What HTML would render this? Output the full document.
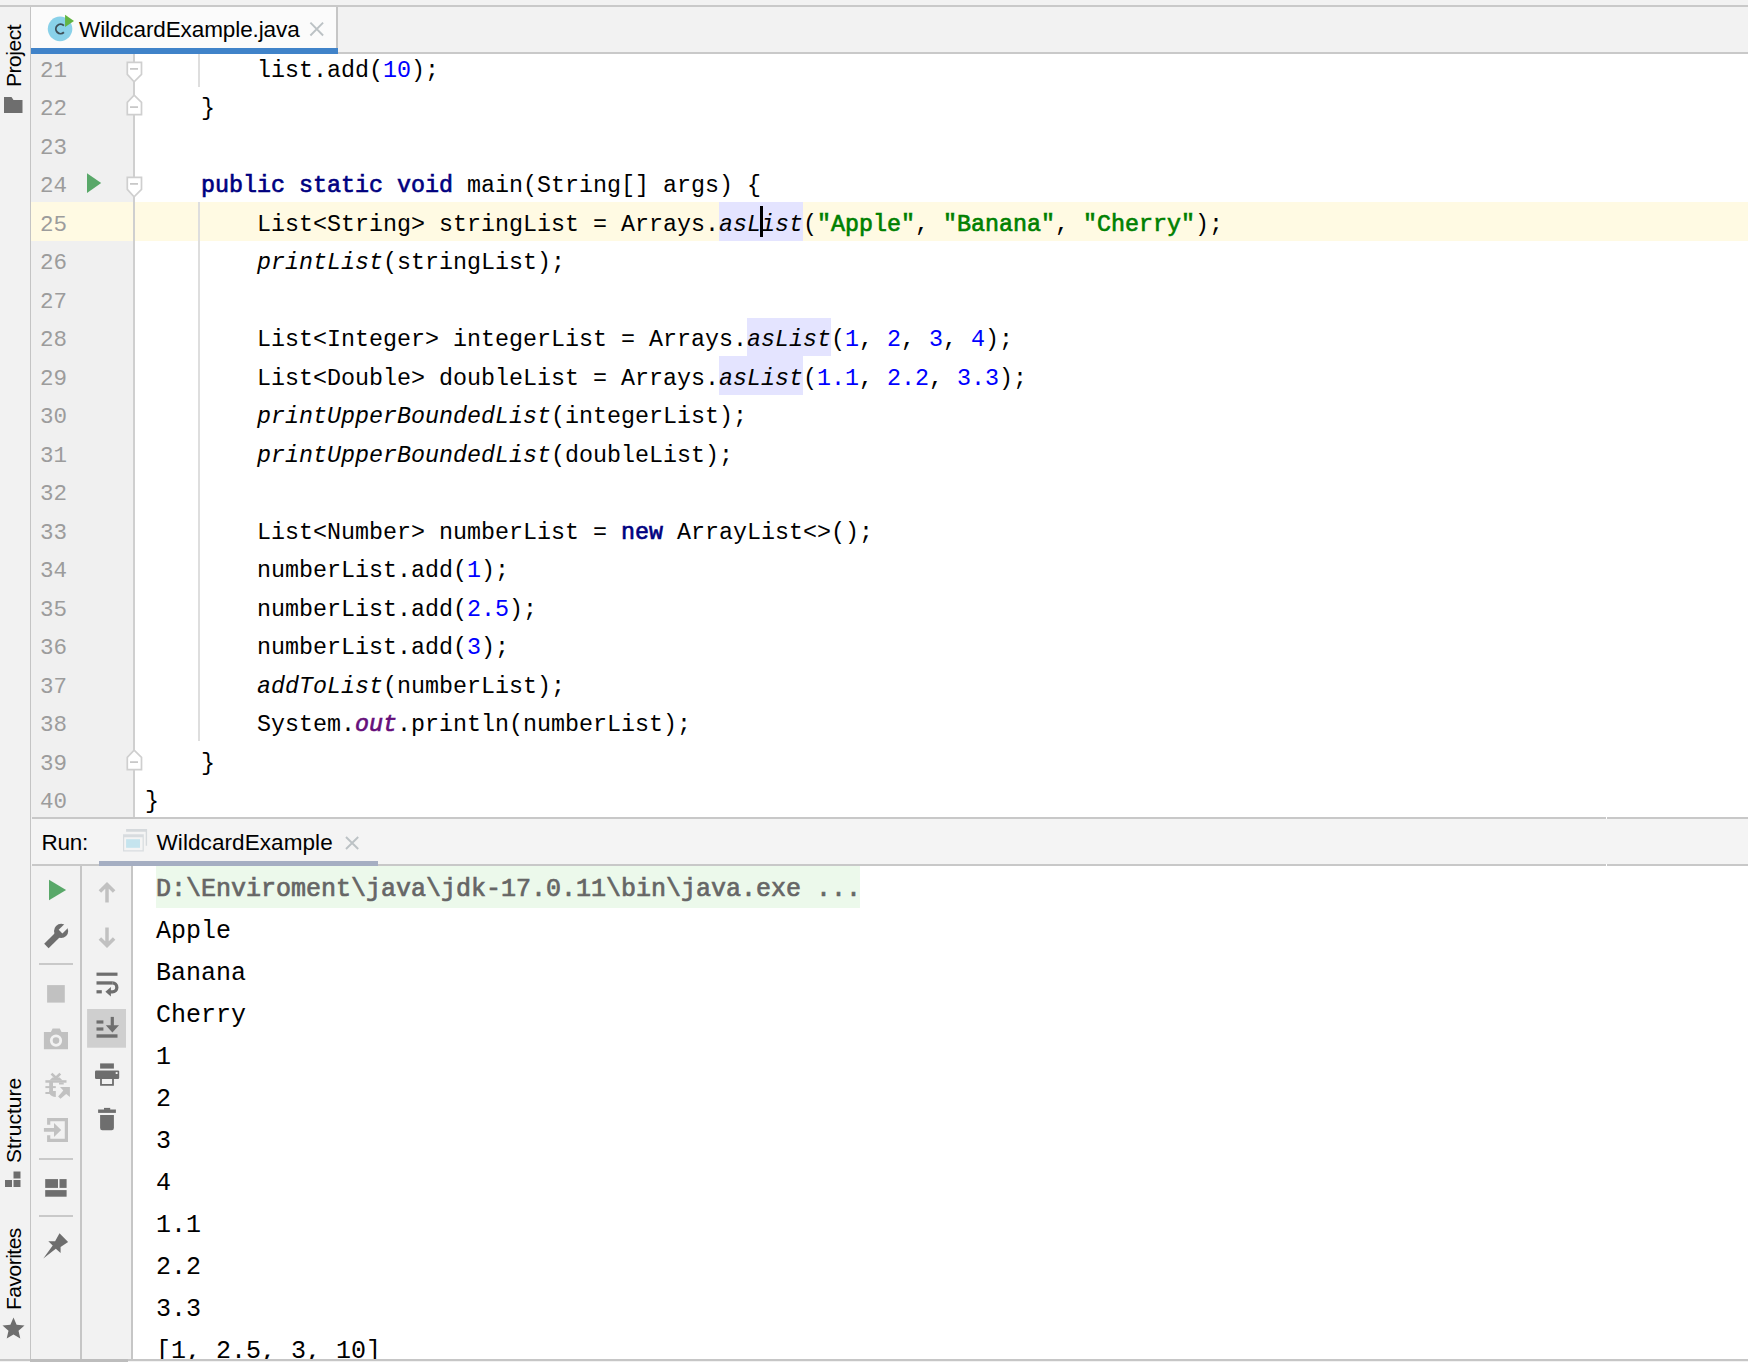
<!DOCTYPE html>
<html><head><meta charset="utf-8"><title>WildcardExample</title>
<style>
*{box-sizing:border-box;margin:0;padding:0}
html,body{width:1748px;height:1362px;overflow:hidden;background:#f2f2f2;font-family:"Liberation Sans",sans-serif;color:#000}
.abs{position:absolute}
#root{position:relative;width:1748px;height:1362px;overflow:hidden;background:#f2f2f2}
/* editor */
#editor{position:absolute;left:31px;top:54px;width:1717px;height:763.5px;background:#fff;overflow:hidden}
#gutter{position:absolute;left:0;top:0;width:102.2px;height:100%;background:#f0f0f0}
#foldline{position:absolute;left:102.1px;top:0;width:1.9px;height:100%;background:#cfcfcf}
.cl,.ln{position:absolute;height:38px;line-height:38px;white-space:pre;font-family:"Liberation Mono",monospace}
.cl{left:114px;font-size:23.33px;color:#000;padding-top:4px}
.ln{left:9px;font-size:22.5px;color:#9c9c9c;padding-top:4px}
.k{color:#000080;-webkit-text-stroke:0.65px #000080}
.s{color:#008000;-webkit-text-stroke:0.65px #008000}
.n{color:#0000ff}
.i{font-style:italic}
.f{color:#660e7a;-webkit-text-stroke:0.65px #660e7a;font-style:italic}
.hl{position:absolute;background:#e4e4ff}
/* console */
#console{position:absolute;left:133px;top:866px;width:1615px;height:493.5px;background:#fff;overflow:hidden}
.co{position:absolute;left:23px;height:42px;line-height:42px;white-space:pre;font-family:"Liberation Mono",monospace;font-size:25px;color:#000;padding-top:3px}
.co.sys{color:#666;-webkit-text-stroke:0.7px #666}
.vt{position:absolute;font-size:21px;white-space:nowrap;transform-origin:0 0;transform:rotate(-90deg);line-height:24px;height:24px}
</style></head><body><div id="root">

<!-- top strip line -->
<div class="abs" style="left:0;top:5px;width:1748px;height:1.6px;background:#c9c9c9"></div>

<!-- left sidebar -->
<div class="abs" style="left:29.8px;top:7px;width:1.3px;height:1353px;background:#c4c4c4"></div>
<div class="vt" style="left:2px;top:86.5px;letter-spacing:-0.45px">Project</div>
<svg class="abs" style="left:3px;top:96px" width="20" height="18" viewBox="0 0 20 18"><path d="M1 1h7.5l2 3H19.5v13H1z" fill="#6e6e6e"/></svg>
<div class="vt" style="left:2px;top:1163px">Structure</div>
<svg class="abs" style="left:4px;top:1171px" width="18" height="17" viewBox="0 0 18 17"><rect x="9.5" y="0.5" width="7" height="7" fill="#6e6e6e"/><rect x="1" y="9" width="7" height="7" fill="#6e6e6e"/><rect x="9.5" y="9" width="7" height="7" fill="#6e6e6e"/></svg>
<div class="vt" style="left:2px;top:1310px;letter-spacing:-0.5px">Favorites</div>
<svg class="abs" style="left:2px;top:1317px" width="23" height="22" viewBox="0 0 23 22"><path d="M11.5 0.5l3.1 7.3 7.9.7-6 5.2 1.8 7.8-6.8-4.1-6.8 4.1 1.8-7.8-6-5.2 7.9-.7z" fill="#6e6e6e"/></svg>

<!-- tab bar -->
<div class="abs" style="left:31px;top:52.3px;width:1717px;height:1.7px;background:#c9c9c9"></div>
<div class="abs" style="left:31px;top:6.6px;width:305.5px;height:47.4px;background:#fbfbfb"></div>
<div class="abs" style="left:336.1px;top:6.6px;width:1.9px;height:42px;background:#c6c6c6"></div>
<div class="abs" style="left:31px;top:48px;width:307px;height:5.7px;background:#4083c9"></div>
<svg class="abs" style="left:46px;top:14px" width="30" height="28" viewBox="0 0 30 28"><circle cx="14.05" cy="14.85" r="12.3" fill="#89d1e9"/><path d="M17.9 18.3a4.7 4.7 0 1 1 0-6.7" fill="none" stroke="#3e4f58" stroke-width="1.9"/><path d="M19.06 0.87L28 7.1L19.06 13.05z" fill="#62b543"/></svg>
<div class="abs" id="tabtitle" style="left:79px;top:17px;font-size:22.5px;letter-spacing:-0.1px;line-height:26px;white-space:nowrap">WildcardExample.java</div>
<svg class="abs" style="left:308px;top:20px" width="18" height="18" viewBox="308 20 18 18"><path d="M310.4 22.6L323.1 35.5M323.1 22.6L310.4 35.5" stroke="#bcc2c5" stroke-width="1.9" fill="none"/></svg>

<!-- editor -->
<div id="editor">
  <div class="abs" style="left:0;top:148px;width:1717px;height:39px;background:#fffae3"></div>
  <div id="gutter"></div>
  <div class="abs" style="left:0;top:148px;width:102.2px;height:39px;background:#fffae3"></div>
  <div id="foldline"></div>
  <!-- identifier highlights -->
  <div class="hl" style="left:688px;top:148px;width:84px;height:39px"></div>
  <div class="hl" style="left:716px;top:264px;width:84px;height:38px"></div>
  <div class="hl" style="left:688px;top:302px;width:84px;height:39px"></div>
  <!-- indent guides -->
  <div class="abs" style="left:167.2px;top:0;width:1.5px;height:33px;background:#dedede"></div>
  <div class="abs" style="left:167.2px;top:148px;width:1.5px;height:539px;background:#dedede"></div>
  <div class="ln" style="top:-6.0px">21</div><div class="ln" style="top:32.0px">22</div><div class="ln" style="top:71.0px">23</div><div class="ln" style="top:109.0px">24</div><div class="ln" style="top:148.0px">25</div><div class="ln" style="top:186.0px">26</div><div class="ln" style="top:225.0px">27</div><div class="ln" style="top:263.0px">28</div><div class="ln" style="top:302.0px">29</div><div class="ln" style="top:340.0px">30</div><div class="ln" style="top:379.0px">31</div><div class="ln" style="top:417.0px">32</div><div class="ln" style="top:456.0px">33</div><div class="ln" style="top:494.0px">34</div><div class="ln" style="top:533.0px">35</div><div class="ln" style="top:571.0px">36</div><div class="ln" style="top:610.0px">37</div><div class="ln" style="top:648.0px">38</div><div class="ln" style="top:687.0px">39</div><div class="ln" style="top:725.0px">40</div>
  <div class="cl" style="top:-6.0px">        list.add(<span class="n">10</span>);</div><div class="cl" style="top:32.0px">    }</div><div class="cl" style="top:71.0px"></div><div class="cl" style="top:109.0px">    <span class="k">public static void</span> main(String[] args) {</div><div class="cl" style="top:148.0px">        List&lt;String&gt; stringList = Arrays.<span class="i">asList</span>(<span class="s">"Apple"</span>, <span class="s">"Banana"</span>, <span class="s">"Cherry"</span>);</div><div class="cl" style="top:186.0px">        <span class="i">printList</span>(stringList);</div><div class="cl" style="top:225.0px"></div><div class="cl" style="top:263.0px">        List&lt;Integer&gt; integerList = Arrays.<span class="i">asList</span>(<span class="n">1</span>, <span class="n">2</span>, <span class="n">3</span>, <span class="n">4</span>);</div><div class="cl" style="top:302.0px">        List&lt;Double&gt; doubleList = Arrays.<span class="i">asList</span>(<span class="n">1.1</span>, <span class="n">2.2</span>, <span class="n">3.3</span>);</div><div class="cl" style="top:340.0px">        <span class="i">printUpperBoundedList</span>(integerList);</div><div class="cl" style="top:379.0px">        <span class="i">printUpperBoundedList</span>(doubleList);</div><div class="cl" style="top:417.0px"></div><div class="cl" style="top:456.0px">        List&lt;Number&gt; numberList = <span class="k">new</span> ArrayList&lt;&gt;();</div><div class="cl" style="top:494.0px">        numberList.add(<span class="n">1</span>);</div><div class="cl" style="top:533.0px">        numberList.add(<span class="n">2.5</span>);</div><div class="cl" style="top:571.0px">        numberList.add(<span class="n">3</span>);</div><div class="cl" style="top:610.0px">        <span class="i">addToList</span>(numberList);</div><div class="cl" style="top:648.0px">        System.<span class="f">out</span>.println(numberList);</div><div class="cl" style="top:687.0px">    }</div><div class="cl" style="top:725.0px">}</div>
  <!-- caret -->
  <div class="abs" style="left:729px;top:152px;width:3px;height:31px;background:#000"></div>
  <!-- run gutter icon -->
  <svg class="abs" style="left:55px;top:118px" width="17" height="22" viewBox="0 0 17 22"><path d="M1 1.2l14.2 9.9L1 21z" fill="#59a869"/></svg>
  <svg class="abs" style="left:94px;top:-6.0px" width="20" height="39" viewBox="0 0 20 39"><path d="M2.3 14.4H16.5V26.4L9.1 33.8L2.3 26.4z" fill="#fff" stroke="#cfcfcf" stroke-width="1.7"/><path d="M5 20.9h8" stroke="#c6c6c6" stroke-width="1.7"/></svg>
  <svg class="abs" style="left:94px;top:32.0px" width="20" height="39" viewBox="0 0 20 39"><path d="M9.1 9.2L16.5 16.3V28.6H2.3V16.3z" fill="#fff" stroke="#cfcfcf" stroke-width="1.7"/><path d="M5 21.1h8" stroke="#c6c6c6" stroke-width="1.7"/></svg>
  <svg class="abs" style="left:94px;top:109.0px" width="20" height="39" viewBox="0 0 20 39"><path d="M2.3 14.4H16.5V26.4L9.1 33.8L2.3 26.4z" fill="#fff" stroke="#cfcfcf" stroke-width="1.7"/><path d="M5 20.9h8" stroke="#c6c6c6" stroke-width="1.7"/></svg>
  <svg class="abs" style="left:94px;top:687.0px" width="20" height="39" viewBox="0 0 20 39"><path d="M9.1 9.2L16.5 16.3V28.6H2.3V16.3z" fill="#fff" stroke="#cfcfcf" stroke-width="1.7"/><path d="M5 21.1h8" stroke="#c6c6c6" stroke-width="1.7"/></svg>
</div>

<!-- editor bottom border / run header -->
<div class="abs" style="left:32px;top:817.2px;width:1716px;height:1.7px;background:#c8c8c8"></div>
<div class="abs" style="left:31px;top:818.8px;width:1717px;height:46px;background:#f4f4f4"></div>
<div class="abs" style="left:32px;top:864.3px;width:1716px;height:1.7px;background:#c8c8c8"></div>
<div class="abs" style="left:99.4px;top:860.8px;width:278.4px;height:5.2px;background:#a5aec2"></div>
<div class="abs" style="left:1606px;top:817px;width:1px;height:2px;background:#fff"></div>
<div class="abs" style="left:1606px;top:864px;width:1px;height:2px;background:#fff"></div>
<div class="abs" id="runlbl" style="left:41.5px;top:830px;font-size:22.5px;letter-spacing:-0.3px;line-height:26px;white-space:nowrap">Run:</div>
<svg class="abs" style="left:121px;top:827px" width="28" height="26" viewBox="121 827 28 26"><path d="M126.1 829.1H147.1V845.7H145.7V831.8H126.1z" fill="#d5d9dc"/><path d="M123 834.2H143.8V851.4H123zM124.2 837.2V850.2H142.6V837.2z" fill="#d8dcdf" fill-rule="evenodd"/><rect x="126.1" y="839.2" width="13.9" height="8.6" fill="#c5e4ee"/></svg>
<div class="abs" id="runtitle" style="left:156.5px;top:830px;font-size:22.5px;letter-spacing:0.08px;line-height:26px;white-space:nowrap">WildcardExample</div>
<svg class="abs" style="left:343px;top:834px" width="18" height="18" viewBox="343 834 18 18"><path d="M346 837L358.2 849M358.2 837L346 849" stroke="#bcc2c5" stroke-width="1.9" fill="none"/></svg>

<!-- run toolbars -->
<div class="abs" style="left:79.9px;top:866px;width:2px;height:493.5px;background:#c6c6c6"></div>
<div class="abs" style="left:130.9px;top:866px;width:2px;height:493.5px;background:#c6c6c6"></div>
<svg class="abs" style="left:31px;top:866px" width="102" height="494" viewBox="31 866 102 494">
<!-- toolbar 1 -->
<path d="M49 879.7L66.1 889.9L49 900.3z" fill="#59a869"/>
<g fill="#6e6e6e"><circle cx="61.1" cy="930.9" r="7.1"/><path d="M44.2 943.8L55.5 932.6L60 937L48.6 948.2z"/></g>
<path d="M58.7 929.8L62.4 933.5L70.5 925.4L66.8 921.7z" fill="#f2f2f2"/>
<rect x="39" y="963" width="34" height="2" fill="#c9c9c9"/>
<rect x="47.1" y="985.1" width="17.7" height="17.5" fill="#c1c1c1"/>
<g fill="#c1c1c1"><path d="M43.9 1032.1h7l1.7-3.5h7.2l1.7 3.5h6.5v17.1h-24.1z"/></g>
<circle cx="56" cy="1040.6" r="4.7" fill="none" stroke="#f2f2f2" stroke-width="2.8"/>
<!-- bug + arrow (disabled) -->
<g fill="#c1c1c1" stroke="none">
<path d="M51.5 1073.6L56 1078M60.3 1073.6L55.8 1078" stroke="#c1c1c1" stroke-width="2.6" fill="none"/>
<path d="M49.4 1080.6L52.4 1077.5H59.6L62.6 1080.6z"/>
<rect x="45.4" y="1080.2" width="21.1" height="2.5"/>
<rect x="59" y="1082.6" width="4.7" height="1.9"/>
<rect x="49.2" y="1082" width="3.8" height="12"/>
<rect x="45.4" y="1086.1" width="10.4" height="2"/>
<rect x="45.4" y="1092" width="5" height="2"/>
<path d="M53 1091.1H55.8V1096.9Q51.3 1096.6 49.3 1093.4L49.2 1091.1z"/>
<path d="M60 1086.9H69.9V1097L66.2 1093.9L60.5 1098.8L58.1 1096.4L63.3 1090.6z"/>
</g>
<!-- exit -->
<g fill="#c1c1c1"><path d="M47.1 1118H68V1141.9H47.1V1135.3H50.3V1138.7H64.8V1121.2H50.3V1124.8H47.1z"/><path d="M43.9 1128.1H54V1122.9L61.2 1129.9L54 1136.9V1131.7H43.9z"/></g>
<rect x="39" y="1158" width="34" height="2" fill="#c9c9c9"/>
<g fill="#6e6e6e"><rect x="45.2" y="1179.1" width="12.8" height="8.8"/><rect x="59.5" y="1179.1" width="7.1" height="8.8"/><rect x="45.2" y="1190.1" width="21.4" height="6.6"/></g>
<rect x="39" y="1215" width="34" height="2" fill="#c9c9c9"/>
<path d="M59.5 1233.3L68.1 1242.1L60.6 1246.9V1253.1L55.8 1248.7L43.3 1258.4L52.7 1245.6L48.3 1241.2H55.1z" fill="#6e6e6e"/>
<!-- toolbar 2 -->
<g fill="none" stroke="#c1c1c1" stroke-width="3.5"><path d="M107 902.6V884.5M99.9 891.6L107 884.4L114.1 891.6"/><path d="M107 927.5V945.6M99.9 938.4L107 945.6L114.1 938.4"/></g>
<g fill="#6e6e6e"><rect x="96.5" y="972.6" width="21" height="3.2"/><rect x="96.5" y="981.3" width="16" height="3.3"/><rect x="96.5" y="990.2" width="5.3" height="3.2"/><path d="M110.9 987V996.5L105.4 991.7z"/></g>
<path d="M112.4 982.95A4.45 4.45 0 0 1 112.4 991.85H110" fill="none" stroke="#6e6e6e" stroke-width="3.3"/>
<rect x="87.1" y="1009" width="38.9" height="38.7" fill="#cfcfcf"/>
<g fill="#6e6e6e"><rect x="96.5" y="1020.4" width="6.9" height="3.2"/><rect x="96.5" y="1027.4" width="6.9" height="3.2"/><rect x="96.5" y="1034.3" width="21" height="3.4"/><rect x="110.7" y="1016.9" width="3.2" height="9"/><path d="M105.8 1025.3H119L112.4 1032.4z"/></g>
<!-- print -->
<g fill="#6e6e6e"><rect x="100.1" y="1063.4" width="13.8" height="5.2"/><rect x="95" y="1070.4" width="24.2" height="8.5" rx="1.2"/><path d="M100.1 1078.5H113.9V1085.8H100.1zM101.9 1078.9V1084H112.1V1078.9z" fill-rule="evenodd"/></g>
<rect x="115.7" y="1072.1" width="1.9" height="1.9" fill="#f2f2f2"/>
<!-- trash -->
<g fill="#6e6e6e"><rect x="98.1" y="1109.5" width="17.8" height="3.4"/><rect x="104" y="1107.9" width="6.2" height="2"/><path d="M100.1 1115H113.9V1128.1Q113.9 1130.3 111.7 1130.3H102.3Q100.1 1130.3 100.1 1128.1z"/></g>
</svg>


<!-- console -->
<div id="console">
  <div class="abs" style="left:23px;top:0;width:704px;height:41.7px;background:#ecf9eb"></div>
  <div class="co sys" style="top:0.00px">D:\Enviroment\java\jdk-17.0.11\bin\java.exe ...</div><div class="co" style="top:42.00px">Apple</div><div class="co" style="top:84.00px">Banana</div><div class="co" style="top:126.00px">Cherry</div><div class="co" style="top:168.00px">1</div><div class="co" style="top:210.00px">2</div><div class="co" style="top:252.00px">3</div><div class="co" style="top:294.00px">4</div><div class="co" style="top:336.00px">1.1</div><div class="co" style="top:378.00px">2.2</div><div class="co" style="top:420.00px">3.3</div><div class="co" style="top:462.00px">[1, 2.5, 3, 10]</div>
</div>

<!-- bottom strip -->
<div class="abs" style="left:0;top:1359px;width:1748px;height:3px;background:#f2f2f2"></div>
<div class="abs" style="left:0;top:1359px;width:1748px;height:1.6px;background:#c6c6c6"></div>
<div class="abs" style="left:30.2px;top:1359.4px;width:97.5px;height:2.6px;background:#bdbdbd"></div>
</div></body></html>
